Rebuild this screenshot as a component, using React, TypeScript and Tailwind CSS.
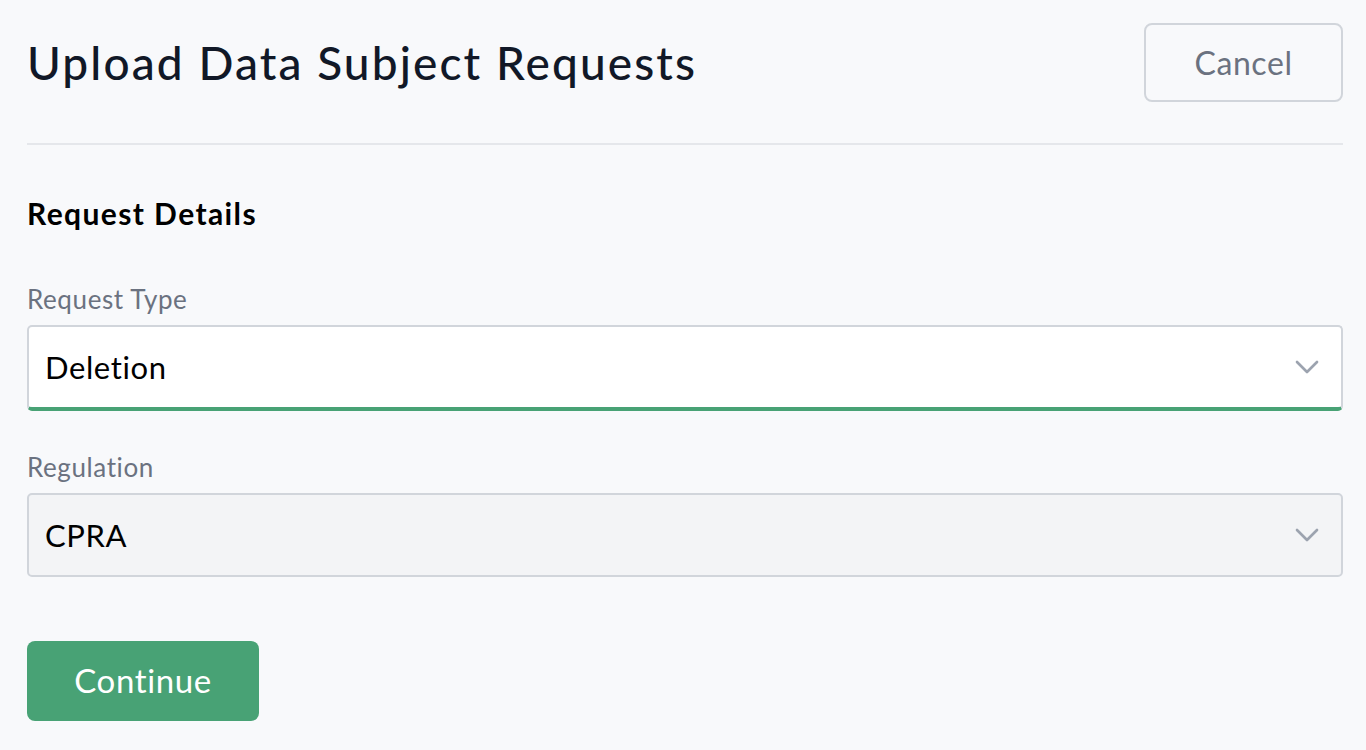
import { ChevronDown } from 'lucide-react';

function SelectField({
  label,
  value,
  disabled,
}: {
  label: string;
  value: string;
  disabled?: boolean;
}) {
  return (
    <div>
      <label className="block text-[26px] leading-[32px] tracking-[0.6px] text-[#6b7280] mb-[10px]">{label}</label>
      <div
        className={
          disabled
            ? 'flex items-center justify-between h-[84px] pl-[16px] pr-[14px] bg-[#f3f4f6] border-2 border-[#d1d5db] rounded-[5px]'
            : 'flex items-center justify-between h-[86px] pl-[16px] pr-[14px] bg-white border-2 border-[#d1d5db] border-b-[4px] border-b-[#48a275] rounded-[5px]'
        }
      >
        <span className="text-[31px] tracking-[0.6px] text-black">{value}</span>
        <ChevronDown className="w-[40px] h-[40px] text-[#9ca3af]" strokeWidth={1.6} />
      </div>
    </div>
  );
}

export default function App() {
  return (
    <div
      className="min-h-[750px] bg-[#f8f9fb] pl-[27px] pr-[23px]"
      style={{ fontFamily: 'Lato, "Noto Sans", sans-serif' }}
    >
      <div className="flex items-center justify-between pt-[23px] pb-[41px] border-b-2 border-[#e5e7eb]">
        <h1 className="text-[46px] leading-none font-medium text-[#111827] tracking-[2.1px]">
          Upload Data Subject Requests
        </h1>
        <button className="w-[199px] h-[79px] border-2 border-[#d1d5db] rounded-[8px] text-[32px] tracking-[0.6px] text-[#6b7280]">
          Cancel
        </button>
      </div>

      <h2 className="mt-[50px] text-[30px] leading-[36px] font-bold tracking-[1.4px] text-black">Request Details</h2>

      <div className="mt-[52px] flex flex-col gap-[40px]">
        <SelectField label="Request Type" value="Deletion" />
        <SelectField label="Regulation" value="CPRA" disabled />
      </div>

      <button className="mt-[64px] w-[232px] h-[80px] rounded-[8px] bg-[#48a275] text-white text-[33px] tracking-[0.6px]">
        Continue
      </button>
    </div>
  );
}
